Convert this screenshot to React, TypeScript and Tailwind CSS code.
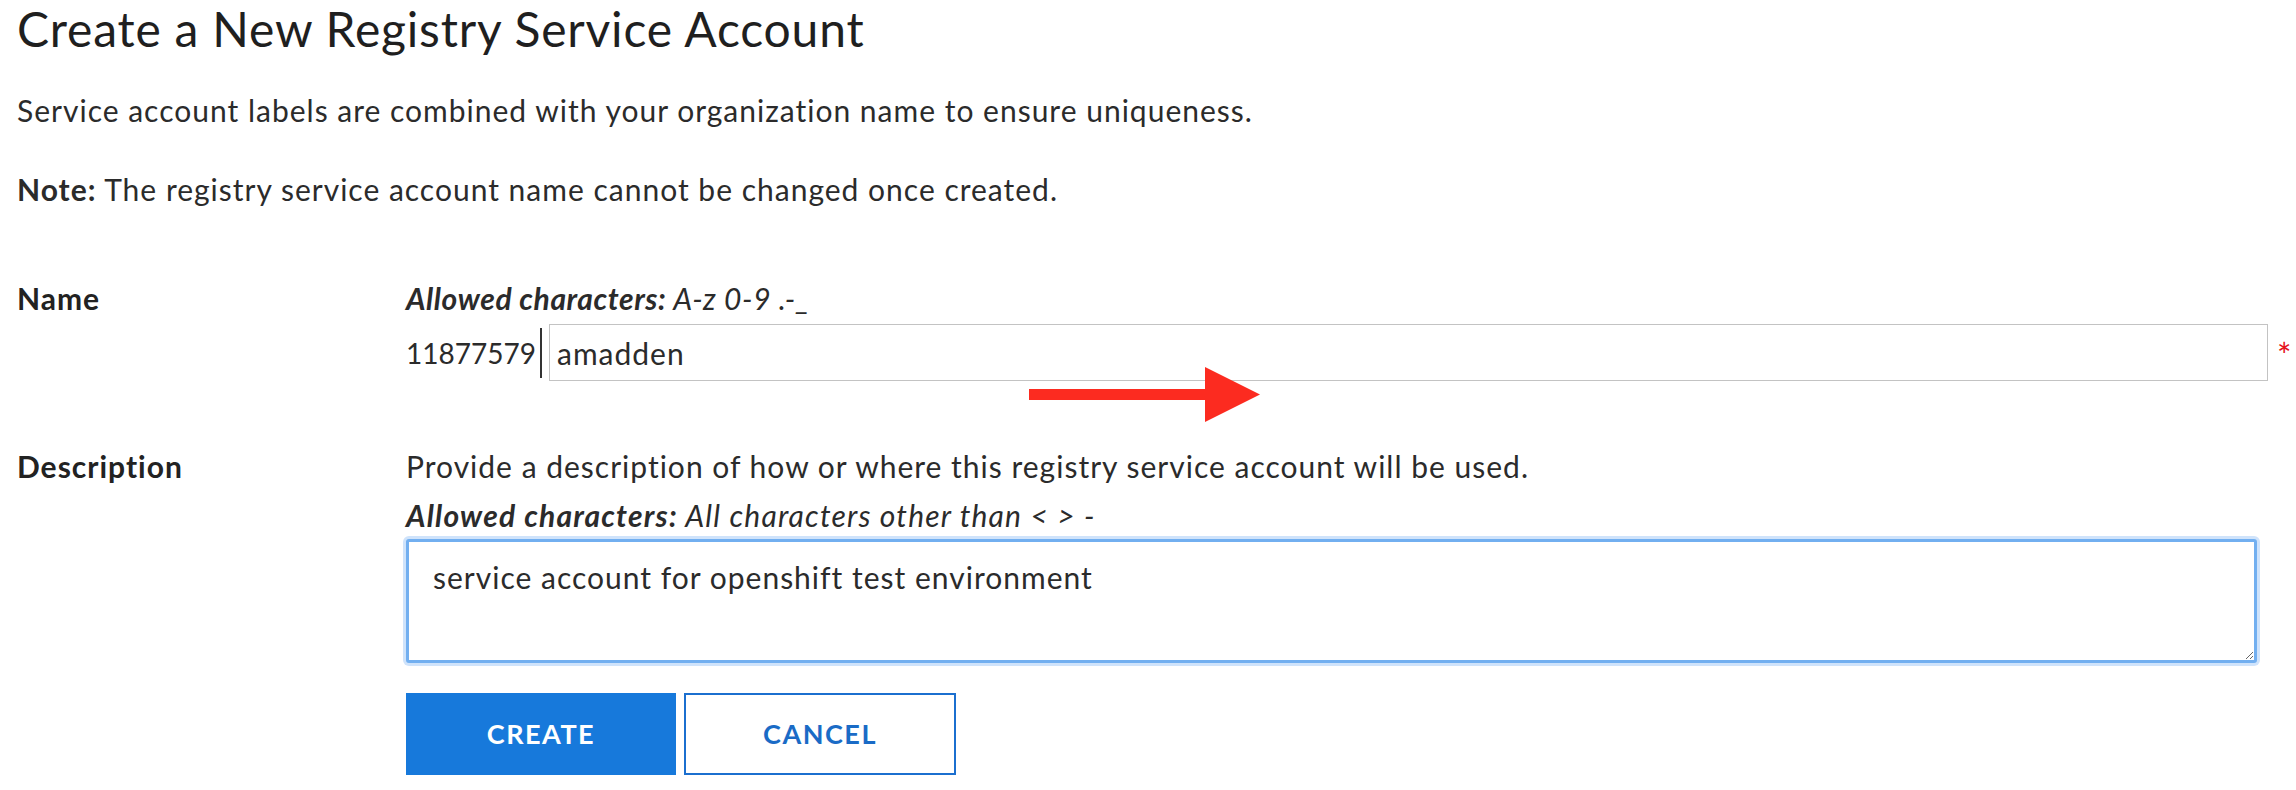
import React from "react";

export default function App() {
  return (
    <div
      className="relative w-[2296px] h-[790px] bg-white text-[#2b2b2b] overflow-hidden"
      style={{ fontFamily: "Lato, 'Open Sans', sans-serif" }}
    >
      <div className="pl-[17px]">
        <h1 className="pt-[1px] text-[48px] leading-[56px] font-normal tracking-[0.8px] text-[#1f1f1f]">
          Create a New Registry Service Account
        </h1>
        <p className="mt-[33px] text-[30px] leading-[40px] tracking-[1px]">
          Service account labels are combined with your organization name to ensure uniqueness.
        </p>
        <p className="mt-[39px] text-[30px] leading-[40px] tracking-[1px]">
          <span className="font-bold">Note:</span> The registry service account name cannot be changed once created.
        </p>

        {/* Name row */}
        <div className="mt-[69px] flex">
          <div className="w-[389px] shrink-0 text-[30px] leading-[40px] tracking-[1px] font-bold text-[#222]">Name</div>
          <div className="flex-1 min-w-0">
            <div className="text-[30px] leading-[40px] tracking-[0.6px] italic">
              <span className="font-bold">Allowed characters:</span> A-z 0-9 .-_
            </div>
            <div className="mt-[6px] flex items-center h-[57px]">
              <span className="shrink-0 text-[28px] leading-[40px] w-[124px]">11877579</span>
              <span className="shrink-0 ml-[10px] w-[2px] h-[50px] bg-[#333] self-start mt-[4px]" />
              <input
                defaultValue="amadden"
                className="shrink-0 ml-[7px] w-[1719px] h-[57px] border border-[#c3c3c3] px-[7px] text-[30px] tracking-[1px] text-[#2b2b2b] outline-none bg-white"
              />
              <span className="shrink-0 ml-[9px] text-[34px] leading-none text-[#e5131b] self-start mt-[14px]">*</span>
            </div>
          </div>
        </div>

        {/* Description row */}
        <div className="mt-[65px] flex">
          <div className="w-[389px] shrink-0 text-[30px] leading-[40px] tracking-[1px] font-bold text-[#222]">Description</div>
          <div className="flex-1 min-w-0">
            <div className="text-[30px] leading-[40px] tracking-[1px]">
              Provide a description of how or where this registry service account will be used.
            </div>
            <div className="mt-[9px] text-[30px] leading-[40px] tracking-[1.2px] italic">
              <span className="font-bold">Allowed characters:</span> All characters other than &lt; &gt; -
            </div>
            <textarea
              defaultValue="service account for openshift test environment"
              className="block mt-[4px] w-[1851px] h-[124px] rounded-[3px] border-[3px] border-[#72aff0] shadow-[0_0_0_3px_#cfe3fb] pl-[24px] pt-[15px] text-[30px] leading-[40px] tracking-[1px] text-[#2b2b2b] outline-none bg-white"
            />
            <div className="mt-[30px] flex gap-[8px]">
              <button className="w-[270px] h-[82px] bg-[#1779db] text-white text-[27px] font-bold tracking-[1.5px]">
                CREATE
              </button>
              <button className="w-[272px] h-[82px] bg-white border-[2px] border-[#1b6fcf] text-[#1a6bc6] text-[27px] font-bold tracking-[1.5px]">
                CANCEL
              </button>
            </div>
          </div>
        </div>
      </div>

      {/* Red annotation arrow */}
      <svg
        className="absolute left-[1029px] top-[367px]"
        width="232"
        height="56"
        viewBox="0 0 232 56"
      >
        <rect x="0" y="22" width="180" height="11" fill="#fc2b20" />
        <polygon points="176,0 231,27.5 176,55" fill="#fc2b20" />
      </svg>
    </div>
  );
}
